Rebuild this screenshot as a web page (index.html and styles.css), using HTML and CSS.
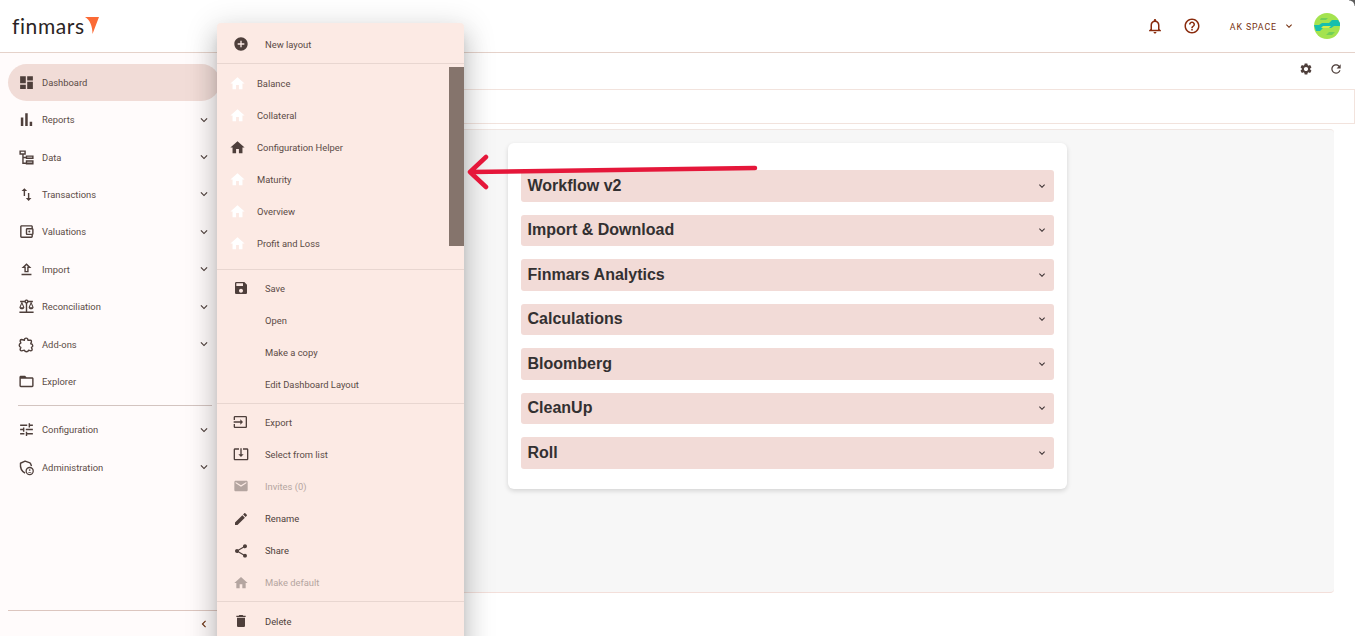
FILE: index.html
```html
<!DOCTYPE html>
<html lang="en">
<head>
<meta charset="utf-8">
<title>Finmars Dashboard</title>
<link rel="stylesheet" href="styles.css">
</head>
<body>
<svg class="defs" aria-hidden="true">
  <symbol id="i-dashboard" viewBox="0 0 24 24"><path d="M3 13h8V3H3v10zm0 8h8v-6H3v6zm10 0h8V11h-8v10zm0-18v6h8V3h-8z"/></symbol>
  <symbol id="i-bars" viewBox="0 0 24 24"><path d="M4 9.200h3.500V21H4zM10.200 3h3.500v18h-3.500zm6.300 12H20v6h-3.500z"/></symbol>
  <symbol id="i-data" viewBox="0 0 24 24"><path fill-rule="evenodd" d="M2 2h9v6H8v3h3V9h11v5H11v-1H8v6h3v-3h11v6H11v-1H6V8H2zm2 2v2h5V4zm9 7v1h7v-1zm0 7v1h7v-1z"/></symbol>
  <symbol id="i-swap" viewBox="0 0 24 24"><path d="M16 17.010V10h-2v7.010h-3L15 21l4-3.990h-3zM9 3L5 6.990h3V14h2V6.990h3L9 3z"/></symbol>
  <symbol id="i-wallet" viewBox="0 0 24 24"><path d="M21 7.280V5c0-1.100-.9-2-2-2H5c-1.110 0-2 .9-2 2v14c0 1.100.89 2 2 2h14c1.100 0 2-.9 2-2v-2.280c.59-.35 1-.98 1-1.720V9c0-.74-.41-1.380-1-1.720zM20 9v6h-7V9h7zM5 19V5h14v2h-6c-1.100 0-2 .9-2 2v6c0 1.100.9 2 2 2h6v2H5z"/><circle cx="16" cy="12" r="1.500"/></symbol>
  <symbol id="i-upload" viewBox="0 0 24 24"><path d="M9 16h6v-6h4l-7-7-7 7h4zm3-10.170L14.170 8H13v6h-2V8H9.830L12 5.830zM5 18h14v2H5z"/></symbol>
  <symbol id="i-balance" viewBox="0 0 24 24"><path d="M13 7.830c.85-.3 1.530-.98 1.830-1.830H18l-3 7c0 1.660 1.570 3 3.500 3s3.500-1.340 3.500-3l-3-7h2V4h-6.170c-.41-1.170-1.520-2-2.830-2s-2.420.83-2.830 2H3v2h2l-3 7c0 1.660 1.570 3 3.500 3S9 14.660 9 13L6 6h3.170c.3.85.98 1.530 1.830 1.830V19H2v2h20v-2h-9V7.830zM20.370 13h-3.740l1.870-4.360L20.370 13zm-13 0H3.630L5.500 8.640 7.370 13zM12 6c-.55 0-1-.45-1-1s.45-1 1-1 1 .45 1 1-.45 1-1 1z"/></symbol>
  <symbol id="i-puzzle" viewBox="0 0 24 24"><path fill="none" stroke="currentColor" stroke-width="2" stroke-linejoin="round" d="M9 6c0-4 5-4 5 0l4 0c1 0 1 1 1 2l-1 3c3 0 4 4 1 5l1 3c0 1-1 2-2 2l-3-1c-1 3-5 3-6 0l-4 1c-1 0-2-1-2-2l1-3c-3-1-3-5 0-6L3 7c0-1 1-2 2-2z"/></symbol>
  <symbol id="i-folder" viewBox="0 0 24 24"><path d="M20 6h-8l-2-2H4c-1.100 0-1.990.9-1.990 2L2 18c0 1.100.9 2 2 2h16c1.100 0 2-.9 2-2V8c0-1.100-.9-2-2-2zm0 12H4V8h16v10z"/></symbol>
  <symbol id="i-tune" viewBox="0 0 24 24"><path d="M3 17v2h6v-2H3zM3 5v2h10V5H3zm10 16v-2h8v-2h-8v-2h-2v6h2zM7 9v2H3v2h4v2h2V9H7zm14 4v-2H11v2h10zm-6-4h2V7h4V5h-4V3h-2v6z"/></symbol>
  <symbol id="i-admin" viewBox="0 0 24 24"><path fill="none" stroke="currentColor" stroke-width="2" stroke-linejoin="round" d="M19 10c-.5-2-1-3.500-2-4.500L10 3 3.500 6c-.5 5 1 11 6.500 14"/><circle cx="16.500" cy="17" r="5" fill="none" stroke="currentColor" stroke-width="1.800"/><circle cx="16.500" cy="15.500" r="1.200"/><path d="M13.800 19.500c.5-1.500 4.900-1.500 5.400 0z"/></symbol>
  <symbol id="i-chevron" viewBox="0 0 24 24"><path d="M7.410 8.590L12 13.170l4.590-4.580L18 10l-6 6-6-6z"/></symbol>
  <symbol id="i-add" viewBox="0 0 24 24"><path d="M12 2C6.480 2 2 6.480 2 12s4.480 10 10 10 10-4.480 10-10S17.520 2 12 2zm5 11h-4v4h-2v-4H7v-2h4V7h2v4h4v2z"/></symbol>
  <symbol id="i-home" viewBox="0 0 24 24"><path d="M10 20v-6h4v6h5v-8h3L12 3 2 12h3v8z"/></symbol>
  <symbol id="i-save" viewBox="0 0 24 24"><path d="M17 3H5c-1.110 0-2 .9-2 2v14c0 1.100.89 2 2 2h14c1.100 0 2-.9 2-2V7l-4-4zm-5 16c-1.660 0-3-1.340-3-3s1.340-3 3-3 3 1.340 3 3-1.340 3-3 3zm3-10H5V5h10v4z"/></symbol>
  <symbol id="i-input" viewBox="0 0 24 24"><path d="M3 3.010h16c1.100 0 2 .89 2 2v14c0 1.100-.9 1.980-2 1.980H3c-1.100 0-2-.88-2-1.980V15h2v4.020h16V4.990H3V9H1V5.010c0-1.110.9-2 2-2zM11 16l4-4-4-4v3H1v2h10v3z"/></symbol>
  <symbol id="i-select" viewBox="0 0 24 24"><path d="M12 16.500l4-4h-3v-9h-2v9H8l4 4zm9-13h-6v1.990h6v14.030H3V5.490h6V3.500H3c-1.100 0-2 .9-2 2v14c0 1.100.9 2 2 2h18c1.100 0 2-.9 2-2v-14c0-1.100-.9-2-2-2z"/></symbol>
  <symbol id="i-mail" viewBox="0 0 24 24"><path d="M20 4H4c-1.100 0-1.990.9-1.990 2L2 18c0 1.100.9 2 2 2h16c1.100 0 2-.9 2-2V6c0-1.100-.9-2-2-2zm0 4l-8 5-8-5V6l8 5 8-5v2z"/></symbol>
  <symbol id="i-edit" viewBox="0 0 24 24"><path d="M3 17.250V21h3.750L17.810 9.940l-3.750-3.750L3 17.250zM20.710 7.040c.39-.39.39-1.020 0-1.410l-2.340-2.340c-.39-.39-1.020-.39-1.410 0l-1.830 1.830 3.750 3.750 1.830-1.830z"/></symbol>
  <symbol id="i-share" viewBox="0 0 24 24"><path d="M18 16.080c-.76 0-1.440.3-1.960.77L8.910 12.700c.05-.23.09-.46.09-.7s-.04-.47-.09-.7l7.050-4.110c.54.5 1.250.81 2.040.81 1.660 0 3-1.340 3-3s-1.340-3-3-3-3 1.340-3 3c0 .24.04.47.09.7L8.040 9.810C7.500 9.310 6.790 9 6 9c-1.660 0-3 1.340-3 3s1.340 3 3 3c.79 0 1.500-.31 2.040-.81l7.120 4.160c-.05.21-.08.43-.08.65 0 1.610 1.310 2.920 2.920 2.920 1.610 0 2.920-1.310 2.920-2.920s-1.310-2.920-2.920-2.920z"/></symbol>
  <symbol id="i-delete" viewBox="0 0 24 24"><path d="M6 19c0 1.100.9 2 2 2h8c1.100 0 2-.9 2-2V7H6v12zM19 4h-3.500l-1-1h-5l-1 1H5v2h14V4z"/></symbol>
  <symbol id="i-gear" viewBox="0 0 24 24"><path d="M19.140 12.940c.04-.3.06-.61.06-.94 0-.32-.02-.64-.07-.94l2.030-1.580c.18-.14.23-.41.12-.61l-1.920-3.320c-.12-.22-.37-.29-.59-.22l-2.390.96c-.5-.38-1.030-.7-1.620-.94l-.36-2.540c-.04-.24-.24-.41-.48-.41h-3.840c-.24 0-.43.17-.47.41l-.36 2.540c-.59.24-1.130.57-1.620.94l-2.390-.96c-.22-.08-.47 0-.59.22L2.740 8.870c-.12.21-.08.47.12.61l2.030 1.580c-.05.3-.09.63-.09.94s.02.64.07.94l-2.030 1.580c-.18.14-.23.41-.12.61l1.920 3.320c.12.22.37.29.59.22l2.390-.96c.5.38 1.030.7 1.620.94l.36 2.540c.05.24.24.41.48.41h3.840c.24 0 .44-.17.47-.41l.36-2.540c.59-.24 1.130-.56 1.620-.94l2.390.96c.22.08.47 0 .59-.22l1.920-3.320c.12-.22.07-.47-.12-.61l-2.010-1.580zM12 15.600c-1.980 0-3.600-1.620-3.600-3.600s1.620-3.600 3.600-3.600 3.600 1.620 3.600 3.600-1.620 3.600-3.600 3.600z"/></symbol>
  <symbol id="i-refresh" viewBox="0 0 24 24"><path d="M17.650 6.350C16.200 4.900 14.210 4 12 4c-4.420 0-7.990 3.580-7.990 8s3.570 8 7.990 8c3.730 0 6.840-2.550 7.730-6h-2.080c-.82 2.330-3.040 4-5.650 4-3.310 0-6-2.690-6-6s2.690-6 6-6c1.660 0 3.140.69 4.220 1.780L13 11h7V4l-2.350 2.350z"/></symbol>
  <symbol id="i-bell" viewBox="0 0 24 24"><path d="M12 22c1.100 0 2-.9 2-2h-4c0 1.100.9 2 2 2zm6-6v-5c0-3.070-1.630-5.640-4.500-6.320V4c0-.83-.67-1.500-1.500-1.500s-1.500.67-1.500 1.500v.68C7.640 5.360 6 7.920 6 11v5l-2 2v1h16v-1l-2-2zm-2 1H8v-6c0-2.480 1.510-4.500 4-4.500s4 2.020 4 4.500v6z"/></symbol>
  <symbol id="i-help" viewBox="0 0 24 24"><path d="M11 18h2v-2h-2v2zm1-16C6.480 2 2 6.480 2 12s4.480 10 10 10 10-4.480 10-10S17.520 2 12 2zm0 18c-4.410 0-8-3.590-8-8s3.590-8 8-8 8 3.590 8 8-3.590 8-8 8zm0-14c-2.210 0-4 1.790-4 4h2c0-1.100.9-2 2-2s2 .9 2 2c0 2-3 1.750-3 5h2c0-2.250 3-2.500 3-5 0-2.210-1.790-4-4-4z"/></symbol>
</svg>

<header class="topbar">
  <div class="logo">
    <span class="logo-text">finmars</span>
    <svg class="logo-mark" viewBox="0 0 14 17"><path d="M0 0h14L7.500 17C7.500 9 5 3 0 0z"/></svg>
  </div>
  <div class="top-actions">
    <svg class="ico-top bell"><use href="#i-bell"/></svg>
    <svg class="ico-top help"><use href="#i-help"/></svg>
    <span class="space">AK SPACE</span>
    <svg class="ico-space"><use href="#i-chevron"/></svg>
    <svg class="avatar" viewBox="0 0 26 26">
      <circle cx="13" cy="13" r="13" fill="#a4e34f"/>
      <path d="M0 12h5l3-2h7l3-3h6l2 3v3h-6l-3 2h-8l-3 3H2z" fill="#17bfae"/>
      <path d="M7 5h7l-2 2H6zM15 19h6l-3 3h-6z" fill="#72cf5a"/>
      <path d="M9 13h8l-2 2H7z" fill="#d2ec4c"/>
    </svg>
  </div>
</header>

<div class="shell">
  <aside class="sidebar">
    <nav class="nav">
      <a class="nav-item active"><svg class="ico"><use href="#i-dashboard"/></svg><span>Dashboard</span></a>
      <a class="nav-item"><svg class="ico"><use href="#i-bars"/></svg><span>Reports</span><svg class="caret"><use href="#i-chevron"/></svg></a>
      <a class="nav-item"><svg class="ico"><use href="#i-data"/></svg><span>Data</span><svg class="caret"><use href="#i-chevron"/></svg></a>
      <a class="nav-item"><svg class="ico"><use href="#i-swap"/></svg><span>Transactions</span><svg class="caret"><use href="#i-chevron"/></svg></a>
      <a class="nav-item"><svg class="ico"><use href="#i-wallet"/></svg><span>Valuations</span><svg class="caret"><use href="#i-chevron"/></svg></a>
      <a class="nav-item"><svg class="ico"><use href="#i-upload"/></svg><span>Import</span><svg class="caret"><use href="#i-chevron"/></svg></a>
      <a class="nav-item"><svg class="ico"><use href="#i-balance"/></svg><span>Reconciliation</span><svg class="caret"><use href="#i-chevron"/></svg></a>
      <a class="nav-item"><svg class="ico"><use href="#i-puzzle"/></svg><span>Add-ons</span><svg class="caret"><use href="#i-chevron"/></svg></a>
      <a class="nav-item"><svg class="ico"><use href="#i-folder"/></svg><span>Explorer</span></a>
      <div class="nav-divider"></div>
      <a class="nav-item"><svg class="ico"><use href="#i-tune"/></svg><span>Configuration</span><svg class="caret"><use href="#i-chevron"/></svg></a>
      <a class="nav-item"><svg class="ico"><use href="#i-admin"/></svg><span>Administration</span><svg class="caret"><use href="#i-chevron"/></svg></a>
    </nav>
    <div class="collapse"><svg class="collapse-ico"><use href="#i-chevron"/></svg></div>
  </aside>

  <main class="main">
    <div class="toolbar">
      <svg class="tool gear"><use href="#i-gear"/></svg>
      <svg class="tool refresh"><use href="#i-refresh"/></svg>
    </div>
    <div class="filterbar"></div>
    <section class="panel">
      <div class="card">
        <div class="acc"><span>Workflow v2</span><svg class="acc-ico"><use href="#i-chevron"/></svg></div>
        <div class="acc"><span>Import &amp; Download</span><svg class="acc-ico"><use href="#i-chevron"/></svg></div>
        <div class="acc"><span>Finmars Analytics</span><svg class="acc-ico"><use href="#i-chevron"/></svg></div>
        <div class="acc"><span>Calculations</span><svg class="acc-ico"><use href="#i-chevron"/></svg></div>
        <div class="acc"><span>Bloomberg</span><svg class="acc-ico"><use href="#i-chevron"/></svg></div>
        <div class="acc"><span>CleanUp</span><svg class="acc-ico"><use href="#i-chevron"/></svg></div>
        <div class="acc"><span>Roll</span><svg class="acc-ico"><use href="#i-chevron"/></svg></div>
      </div>
    </section>
  </main>
</div>

<div class="menu">
  <div class="menu-head"><a class="mi"><svg class="mi-ico"><use href="#i-add"/></svg><span>New layout</span></a></div>
  <div class="menu-list">
    <a class="li"><svg class="li-ico white"><use href="#i-home"/></svg><span>Balance</span></a>
    <a class="li"><svg class="li-ico white"><use href="#i-home"/></svg><span>Collateral</span></a>
    <a class="li"><svg class="li-ico"><use href="#i-home"/></svg><span>Configuration Helper</span></a>
    <a class="li"><svg class="li-ico white"><use href="#i-home"/></svg><span>Maturity</span></a>
    <a class="li"><svg class="li-ico white"><use href="#i-home"/></svg><span>Overview</span></a>
    <a class="li"><svg class="li-ico white"><use href="#i-home"/></svg><span>Profit and Loss</span></a>
    <div class="thumb"></div>
  </div>
  <div class="menu-group">
    <a class="mi"><svg class="mi-ico"><use href="#i-save"/></svg><span>Save</span></a>
    <a class="mi"><i class="mi-ico"></i><span>Open</span></a>
    <a class="mi"><i class="mi-ico"></i><span>Make a copy</span></a>
    <a class="mi"><i class="mi-ico"></i><span>Edit Dashboard Layout</span></a>
  </div>
  <div class="menu-group tight">
    <a class="mi"><svg class="mi-ico"><use href="#i-input"/></svg><span>Export</span></a>
    <a class="mi"><svg class="mi-ico"><use href="#i-select"/></svg><span>Select from list</span></a>
    <a class="mi off"><svg class="mi-ico"><use href="#i-mail"/></svg><span>Invites (0)</span></a>
    <a class="mi strong tall"><svg class="mi-ico"><use href="#i-edit"/></svg><span>Rename</span></a>
    <a class="mi strong short"><svg class="mi-ico"><use href="#i-share"/></svg><span>Share</span></a>
    <a class="mi off tall"><svg class="mi-ico"><use href="#i-home"/></svg><span>Make default</span></a>
  </div>
  <div class="menu-foot"><a class="mi strong"><svg class="mi-ico"><use href="#i-delete"/></svg><span>Delete</span></a></div>
</div>

<svg class="arrow" viewBox="0 0 300 40">
  <path d="M288 4 L3 8 M19 -7 L3 8 L19 23"/>
</svg>
</body>
</html>
```

FILE: styles.css
```css
* { box-sizing: border-box; }

html, body {
  margin: 0;
  height: 636px;
  overflow: hidden;
  background: #fff;
  font-family: "Roboto", "Liberation Sans", sans-serif;
  font-size: 9.4px;
  color: #5b4b46;
}

.defs { display: none; }
svg { fill: currentColor; display: block; flex: none; }

/* top bar */
.topbar {
  position: relative;
  height: 53px;
  display: flex;
  align-items: center;
  justify-content: space-between;
  border-bottom: 1px solid #e5d2ca;
  padding: 0 15px 0 12px;
  background: #fff;
}
.topbar::after {
  content: "";
  position: absolute;
  right: 0;
  top: 0;
  width: 6px;
  height: 6px;
  background: radial-gradient(circle at 0 100%, transparent 5px, #5d5d5d 6px);
}
.logo { display: flex; align-items: flex-start; height: 20px; }
.logo-text {
  font-family: "Lato", "Liberation Sans", sans-serif;
  font-size: 21px;
  line-height: 20px;
  letter-spacing: .6px;
  color: #2b2424;
}
.logo-mark { width: 14px; height: 17px; fill: #fb6a35; margin-top: 1px; }
.top-actions { display: flex; align-items: center; color: #8a2c0e; }
.ico-top { width: 18px; height: 18px; }
.help { margin-left: 19px; }
.space {
  margin: 1px 0 0 29px;
  font-size: 8.8px;
  letter-spacing: .9px;
  color: #76300f;
}
.ico-space { width: 12px; height: 12px; margin-left: 6px; color: #76300f; }
.avatar { width: 26px; height: 26px; margin-left: 19px; }

/* shell */
.shell { display: flex; height: 583px; }

.sidebar {
  width: 220px;
  flex: none;
  display: flex;
  flex-direction: column;
  justify-content: space-between;
  background: #fffbfb;
}
.nav { padding-top: 10.6px; }
.nav-item {
  display: flex;
  align-items: center;
  height: 37.4px;
  padding: 0 10px 0 17.5px;
  color: #5b4b46;
}
.nav-item span { margin-left: 7.5px; flex: 1; }
.nav-item.active {
  margin-left: 8px;
  padding-left: 9.5px;
  background: #f1dcd7;
  border-radius: 19px;
}
.ico { width: 17px; height: 17px; color: #4e3f3b; }
.caret { width: 14px; height: 14px; margin-right: -1px; color: #4e3f3b; }
.nav-divider { height: 1px; margin: 4.5px 8px 5.5px 18px; background: #d3c4c0; }
.collapse {
  margin: 0 3px 0 8px;
  height: 26px;
  border-top: 1px solid #dcc6bf;
  display: flex;
  justify-content: flex-end;
  align-items: center;
  padding-right: 6px;
}
.collapse-ico { width: 14px; height: 14px; transform: rotate(90deg); color: #6b3213; }

/* main */
.main { flex: 1; display: flex; flex-direction: column; min-width: 0; }
.toolbar {
  height: 36px;
  display: flex;
  justify-content: flex-end;
  align-items: center;
  gap: 16px;
  padding: 0 12px 4px 0;
  color: #4e3f3b;
}
.tool { width: 14px; height: 14px; }
.filterbar { height: 35px; border: 1px solid #f2e3dd; background: #fff; }
.panel {
  margin: 5px 21px 0 0;
  height: 464px;
  background: #f7f7f7;
  border-top: 1px solid #f0e6e2;
  border-bottom: 1px solid #f3dfda;
  border-radius: 0 4px 4px 0;
  padding: 13px 0 0 288px;
}
.card {
  width: 559px;
  height: 346px;
  background: #fff;
  border-radius: 6px;
  box-shadow: 0 2px 5px rgba(0, 0, 0, .14);
  padding: 27px 13px 0;
  display: flex;
  flex-direction: column;
  gap: 13px;
}
.acc {
  height: 31.5px;
  flex: none;
  display: flex;
  align-items: center;
  justify-content: space-between;
  padding: 0 6px 0 6.5px;
  background: #f2dbd7;
  border-radius: 3px;
  font-family: "Liberation Sans", Arial, sans-serif;
  font-weight: 700;
  font-size: 16px;
  color: #333031;
}
.acc-ico { width: 12px; height: 12px; color: #3d3334; }

/* menu overlay */
.menu {
  position: absolute;
  left: 217px;
  top: 23px;
  width: 247px;
  height: 640px;
  background: #fceae4;
  border-radius: 4px 4px 0 0;
  box-shadow: 0 8px 10px -5px rgba(0, 0, 0, .2), 0 16px 24px 2px rgba(0, 0, 0, .14), 0 6px 30px 5px rgba(0, 0, 0, .12);
  color: #5b4b46;
}
.menu-head { height: 41px; border-bottom: 1px solid #e8d6d0; padding-top: 5px; }
.menu-list {
  position: relative;
  height: 206px;
  padding: 3px 0;
  border-bottom: 1px solid #e8d6d0;
}
.thumb {
  position: absolute;
  right: 0;
  top: 3px;
  width: 15px;
  height: 179px;
  background: #85746c;
}
.li { display: flex; align-items: center; height: 32px; padding-left: 11.5px; }
.li span { margin-left: 11.5px; }
.li-ico { width: 17px; height: 17px; color: #4e3f3b; }
.li-ico.white { color: #fff; }
.menu-group { padding: 2px 0 3px; border-bottom: 1px solid #e8d6d0; }
.menu-group.tight { padding-bottom: 2px; }
.mi { display: flex; align-items: center; height: 32px; padding-left: 16px; }
.mi.tall { height: 33px; }
.mi.short { height: 31px; }
.mi span { margin-left: 16px; }
.mi-ico { width: 16px; height: 16px; color: #4e3f3b; display: block; }
.mi.off { color: #b4a5a0; }
.mi.off .mi-ico { color: #b4a5a0; }
.mi.strong { color: #4e3f3b; }
.menu-foot { padding-top: 3px; }

/* annotation */
.arrow {
  position: absolute;
  left: 467px;
  top: 164px;
  width: 300px;
  height: 40px;
  overflow: visible;
  fill: none;
  stroke: #e5173a;
  stroke-width: 4.5;
  stroke-linecap: round;
  stroke-linejoin: round;
}
```
